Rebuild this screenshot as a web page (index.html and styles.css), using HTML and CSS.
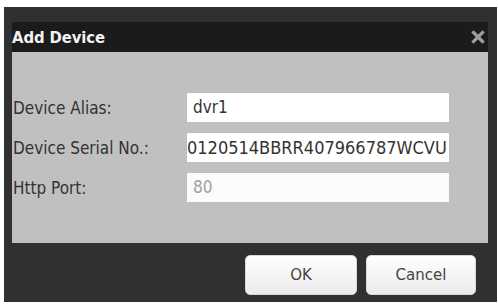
FILE: index.html
```html
<!DOCTYPE html>
<html>
<head>
<meta charset="utf-8">
<link rel="stylesheet" href="styles.css">
</head>
<body>
<div class="dialog">
  <div class="titlebar">
    <span class="title">Add Device</span>
    <span class="close" aria-label="Close">
      <svg width="14" height="14" viewBox="0 0 14 14"><path d="M2.5 2.5L11.5 11.5M11.5 2.5L2.5 11.5" stroke="#9e9e9e" stroke-width="3.2" stroke-linecap="square"/></svg>
    </span>
  </div>
  <div class="panel">
    <div class="form">
      <label class="label">Device Alias:</label>
      <div class="field">dvr1</div>
      <label class="label">Device Serial No.:</label>
      <div class="field field-serial">0120514BBRR407966787WCVU</div>
      <label class="label">Http Port:</label>
      <div class="field field-disabled">80</div>
    </div>
  </div>
  <div class="footer">
    <button class="btn">OK</button>
    <button class="btn btn-cancel">Cancel</button>
  </div>
</div>
</body>
</html>
```

FILE: styles.css
```css
html, body {
  margin: 0;
  padding: 0;
  background: #ffffff;
}
body {
  width: 498px;
  height: 304px;
  overflow: hidden;
}
.dialog {
  margin: 7px 0 0 4px;
  width: 493px;
  height: 295px;
  box-sizing: border-box;
  padding: 15px 9px 0 8px;
  background: #303030;
  display: flex;
  flex-direction: column;
  font-family: "DejaVu Sans Condensed", "DejaVu Sans", sans-serif;
}
.titlebar {
  height: 30px;
  background: #1b1b1b;
  display: flex;
  align-items: center;
  justify-content: space-between;
}
.title {
  color: #f2f2f2;
  font-weight: bold;
  font-size: 16.5px;
  letter-spacing: -0.1px;
}
.close {
  display: flex;
  margin-right: 3px;
}
.panel {
  height: 191px;
  background: #c0c0c0;
  display: flex;
  align-items: center;
}
.form {
  display: grid;
  grid-template-columns: 175px 262px;
  row-gap: 11px;
  align-items: center;
}
.label {
  color: #333333;
  font-size: 17px;
  padding-left: 1px;
}
.field {
  height: 29px;
  box-sizing: border-box;
  background: #ffffff;
  color: #333333;
  font-size: 17px;
  line-height: 29px;
  padding-left: 6px;
  white-space: nowrap;
  overflow: hidden;
}
.field-serial {
  padding-left: 0;
  font-size: 18px;
}
.field-disabled {
  color: #a0a0a0;
  background: #fbfbfb;
}
.footer {
  flex: 1;
  display: flex;
  justify-content: flex-end;
  align-items: flex-start;
  gap: 9px;
  padding: 12px 12px 0 0;
}
.btn {
  width: 112px;
  height: 40px;
  border: 1px solid #d8d8d8;
  border-radius: 5px;
  background: linear-gradient(#ffffff, #ececec);
  color: #444444;
  font-family: "DejaVu Sans", sans-serif;
  font-size: 15px;
  padding: 0;
}
.btn-cancel {
  width: 110px;
}
```
